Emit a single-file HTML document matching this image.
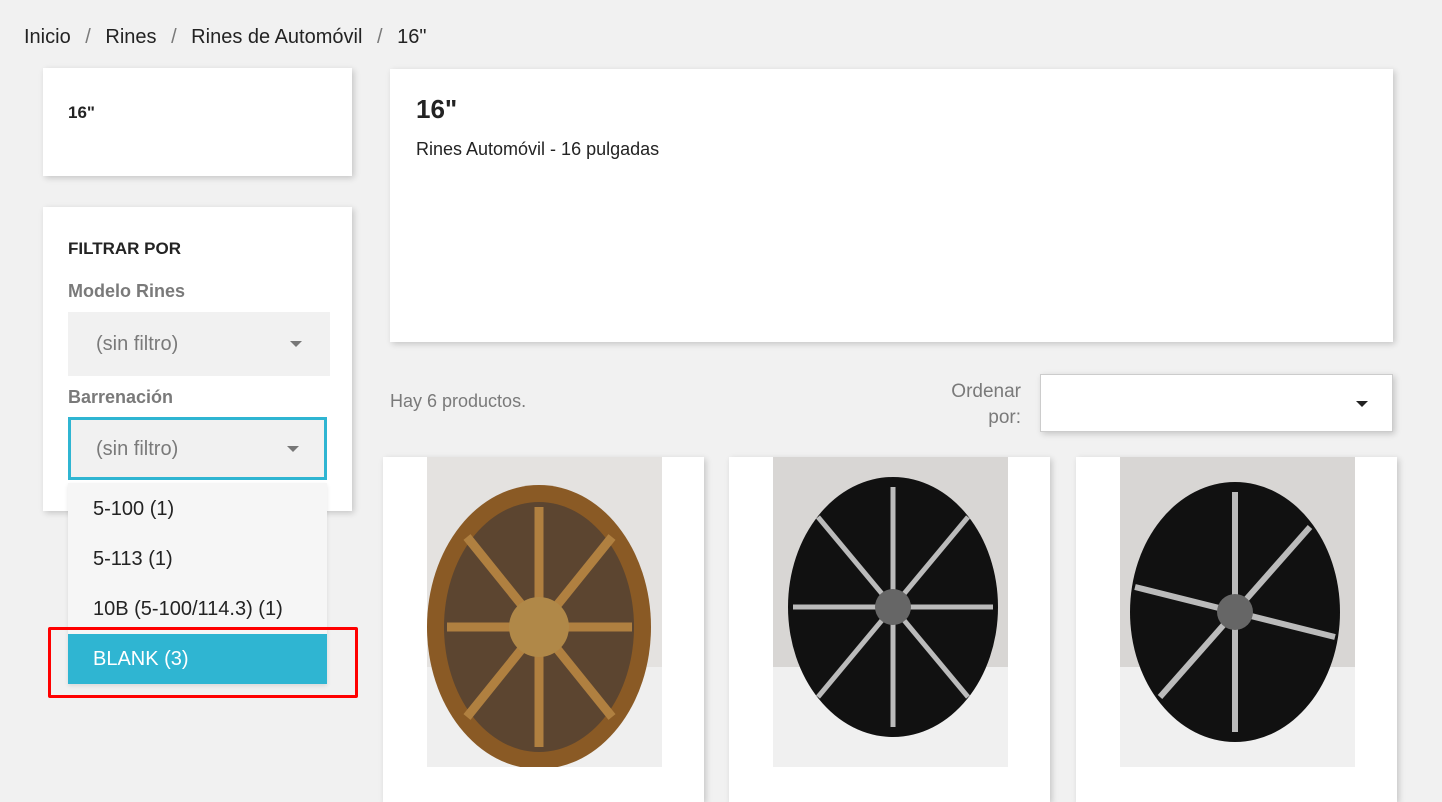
<!DOCTYPE html>
<html><head><meta charset="utf-8"><style>
*{box-sizing:border-box;margin:0;padding:0}
body{width:1442px;height:795px;overflow:hidden;background:#f1f1f1;font-family:"Liberation Sans",sans-serif;color:#232323;position:relative}
.a{position:absolute}
.card{position:absolute;background:#fff;box-shadow:2px 2px 6px rgba(0,0,0,.18)}
.sel{position:absolute;left:68px;width:262px;height:64px;background:#f1f1f1;color:#7a7a7a;font-size:20px;padding:21px 0 0 28px}
.tri{position:absolute;right:28px;top:29px;width:0;height:0;border-left:6px solid transparent;border-right:6px solid transparent;border-top:6px solid #777}
.opt{position:absolute;left:25px;font-size:20px;color:#232323}
</style></head><body>
<div class="a" style="left:24px;top:26px;font-size:20px;color:#232323">Inicio <span style="color:#7a7a7a;margin:0 9px">/</span> Rines <span style="color:#7a7a7a;margin:0 9px">/</span> Rines de Automóvil <span style="color:#7a7a7a;margin:0 9px">/</span> 16"</div>

<div class="card" style="left:43px;top:68px;width:309px;height:108px"><div class="a" style="left:25px;top:35px;font-weight:bold;font-size:17px">16"</div></div>

<div class="card" style="left:43px;top:207px;width:309px;height:304px">
<div class="a" style="left:25px;top:32px;font-weight:bold;font-size:17px">FILTRAR POR</div>
<div class="a" style="left:25px;top:74px;font-weight:bold;font-size:18px;color:#7a7a7a">Modelo Rines</div>
<div class="a" style="left:25px;top:180px;font-weight:bold;font-size:18px;color:#7a7a7a">Barrenación</div>
</div>
<div class="sel" style="top:312px">(sin filtro)<div class="tri"></div></div>
<div class="sel" style="top:417px;height:63px;border:3px solid #2fb5d2;width:259px;padding:18px 0 0 25px">(sin filtro)<div class="tri" style="top:26px;right:25px"></div></div>
<div class="a" style="left:68px;top:483px;width:259px;height:201px;background:#f6f6f6;box-shadow:0 2px 4px rgba(0,0,0,.1)">
<div class="opt" style="top:15px">5-100 (1)</div>
<div class="opt" style="top:65px">5-113 (1)</div>
<div class="opt" style="top:115px">10B (5-100/114.3) (1)</div>
<div class="a" style="left:0;top:151px;width:259px;height:50px;background:#2fb5d2;color:#fff;font-size:20px;padding:14px 0 0 25px">BLANK (3)</div>
</div>
<div class="a" style="left:48px;top:627px;width:310px;height:71px;border:3px solid #f00;border-radius:2px"></div>

<div class="card" style="left:390px;top:69px;width:1003px;height:273px">
<div class="a" style="left:26px;top:25px;font-weight:bold;font-size:26px">16"</div>
<div class="a" style="left:26px;top:70px;font-size:18px">Rines Automóvil - 16 pulgadas</div>
</div>

<div class="a" style="left:390px;top:391px;font-size:18px;color:#7a7a7a">Hay 6 productos.</div>
<div class="a" style="left:930px;top:379px;width:91px;text-align:right;font-size:19px;line-height:26px;color:#7a7a7a">Ordenar por:</div>
<div class="card" style="left:1040px;top:374px;width:353px;height:58px;border:1px solid #ccc"><div class="tri" style="top:26px;right:24px;border-top-color:#222"></div></div>

<div class="card" style="left:383px;top:457px;width:321px;height:345px"></div>
<div class="card" style="left:729px;top:457px;width:321px;height:345px"></div>
<div class="card" style="left:1076px;top:457px;width:321px;height:345px"></div>

<svg class="a" style="left:427px;top:457px" width="235" height="310" viewBox="0 0 235 310">
<rect width="235" height="310" fill="#e4e2e0"/><rect y="210" width="235" height="100" fill="#efefef"/>
<ellipse cx="112" cy="170" rx="112" ry="142" fill="#8a5a25"/><ellipse cx="112" cy="170" rx="95" ry="125" fill="#5c4530"/>
<g stroke="#b08040" stroke-width="9"><line x1="112" y1="50" x2="112" y2="290"/><line x1="20" y1="170" x2="205" y2="170"/><line x1="40" y1="80" x2="185" y2="260"/><line x1="185" y1="80" x2="40" y2="260"/></g>
<circle cx="112" cy="170" r="30" fill="#b08848"/>
</svg>
<svg class="a" style="left:773px;top:457px" width="235" height="310" viewBox="0 0 235 310">
<rect width="235" height="310" fill="#d8d6d4"/><rect y="210" width="235" height="100" fill="#f0f0f0"/>
<ellipse cx="120" cy="150" rx="105" ry="130" fill="#111"/>
<g stroke="#bbb" stroke-width="5"><line x1="120" y1="30" x2="120" y2="270"/><line x1="20" y1="150" x2="220" y2="150"/><line x1="45" y1="60" x2="195" y2="240"/><line x1="195" y1="60" x2="45" y2="240"/></g>
<circle cx="120" cy="150" r="18" fill="#666"/>
</svg>
<svg class="a" style="left:1120px;top:457px" width="235" height="310" viewBox="0 0 235 310">
<rect width="235" height="310" fill="#d8d6d4"/><rect y="210" width="235" height="100" fill="#f0f0f0"/>
<ellipse cx="115" cy="155" rx="105" ry="130" fill="#111"/>
<g stroke="#bbb" stroke-width="6"><line x1="115" y1="35" x2="115" y2="275"/><line x1="15" y1="130" x2="215" y2="180"/><line x1="40" y1="240" x2="190" y2="70"/></g>
<circle cx="115" cy="155" r="18" fill="#666"/>
</svg>
</body></html>
